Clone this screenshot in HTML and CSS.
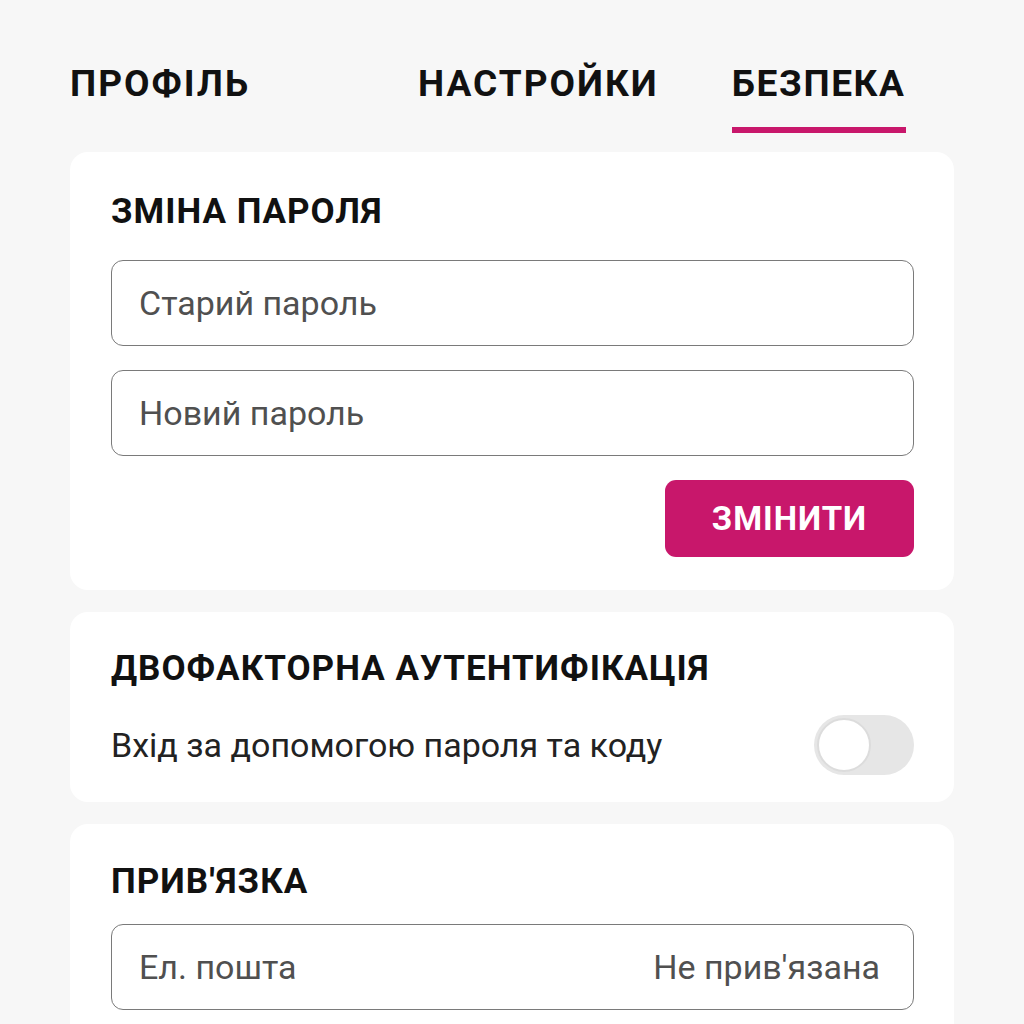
FILE: index.html
```html
<!DOCTYPE html>
<html lang="uk">
<head>
<meta charset="utf-8">
<link rel="stylesheet" href="styles.css">
</head>
<body>
<div class="page">
  <nav class="tabs">
    <div class="tab tab-profile">ПРОФІЛЬ</div>
    <div class="tab tab-settings">НАСТРОЙКИ</div>
    <div class="tab tab-security active">БЕЗПЕКА</div>
  </nav>

  <section class="card card-password">
    <h2 class="card-title">ЗМІНА ПАРОЛЯ</h2>
    <div class="field"><span class="placeholder">Старий пароль</span></div>
    <div class="field"><span class="placeholder">Новий пароль</span></div>
    <div class="actions"><button class="btn">ЗМІНИТИ</button></div>
  </section>

  <section class="card card-2fa">
    <h2 class="card-title">ДВОФАКТОРНА АУТЕНТИФІКАЦІЯ</h2>
    <div class="row">
      <span class="row-text">Вхід за допомогою пароля та коду</span>
      <span class="toggle"><span class="knob"></span></span>
    </div>
  </section>

  <section class="card card-link">
    <h2 class="card-title">ПРИВ'ЯЗКА</h2>
    <div class="field field-split">
      <span class="placeholder">Ел. пошта</span>
      <span class="placeholder">Не прив'язана</span>
    </div>
  </section>
</div>
</body>
</html>
```

FILE: styles.css
```css
* { box-sizing: border-box; }
html, body {
  margin: 0;
  padding: 0;
  background: #f7f7f7;
  font-family: "Roboto", "Liberation Sans", sans-serif;
  color: #111;
  overflow: hidden;
}
.page {
  width: 1024px;
  height: 1024px;
  padding: 0 70px;
}
.tabs {
  display: flex;
  align-items: flex-start;
  height: 152px;
  padding-top: 62px;
}
.tab {
  font-size: 37px;
  font-weight: 700;
  letter-spacing: 2px;
  line-height: 44px;
  color: #111;
  padding-bottom: 21px;
}
.tab-settings { margin-left: 168px; }
.tab-security { margin-left: 73px; letter-spacing: 1.6px; }
.tab.active { border-bottom: 6px solid #c8176b; }

.card {
  background: #fff;
  border-radius: 18px;
  padding: 40px 40px 34px 41px;
  margin-bottom: 22px;
}
.card-title {
  margin: 0 0 28px 0;
  font-size: 35px;
  font-weight: 700;
  letter-spacing: 1px;
  line-height: 40px;
  color: #111;
}
.field {
  height: 86px;
  border: 1.5px solid #7a7a7a;
  border-radius: 12px;
  display: flex;
  align-items: center;
  padding: 0 27px;
  margin-bottom: 24px;
}
.placeholder {
  font-size: 34px;
  color: #505050;
}
.field-split { justify-content: space-between; padding-right: 33px; }
.actions {
  display: flex;
  justify-content: flex-end;
}
.btn {
  width: 249px;
  height: 77px;
  border: none;
  border-radius: 11px;
  background: #c8176b;
  color: #fff;
  font-family: inherit;
  font-size: 33px;
  font-weight: 700;
  letter-spacing: 1px;
}
.card-password { height: 438px; }
.card-2fa { height: 190px; padding-top: 37px; }
.card-2fa .card-title { margin-bottom: 26px; }
.row {
  display: flex;
  justify-content: space-between;
  align-items: center;
}
.row-text {
  font-size: 34px;
  color: #222;
}
.toggle {
  width: 100px;
  height: 60px;
  border-radius: 30px;
  background: #e6e6e6;
  display: flex;
  align-items: center;
  padding-left: 3px;
}
.knob {
  width: 54px;
  height: 54px;
  border-radius: 50%;
  background: #fff;
  border: 2px solid #dcdcdc;
}
.card-link { padding-top: 38px; }
.card-link .card-title { margin-bottom: 22px; }
```
